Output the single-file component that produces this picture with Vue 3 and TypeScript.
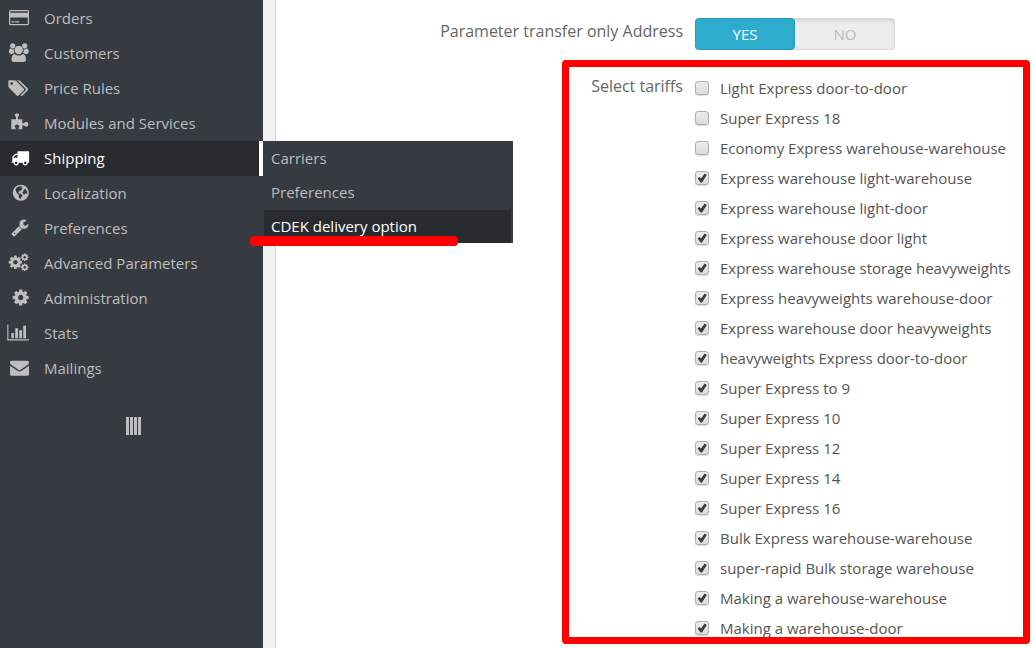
<script setup lang="ts">
import { ref } from 'vue'

interface Shape {
  d: string
  t?: string
}
interface MenuItem {
  label: string
  icon: Shape[]
  active?: boolean
}
interface Tariff {
  label: string
  checked: boolean
}

const cog =
  'M1152 896q0-106-75-181t-181-75-181 75-75 181 75 181 181 75 181-75 75-181zm512-109v222q0 12-8 23t-20 13l-185 28q-19 54-39 91 35 50 107 138 10 12 10 25t-9 23q-27 37-99 108t-94 71q-12 0-26-9l-138-108q-44 23-91 38-16 136-29 186-7 28-36 28h-222q-14 0-24.5-8.5t-11.5-21.5l-28-184q-49-16-90-37l-141 107q-10 9-25 9-14 0-25-11-126-114-165-168-7-10-7-23 0-12 8-23 15-21 51-66.5t54-70.5q-27-50-41-99l-183-27q-13-2-21-12.5t-8-23.5v-222q0-12 8-23t19-13l186-28q14-46 39-92-40-57-107-138-10-12-10-24 0-10 9-23 26-36 98.5-107.5t94.5-71.5q13 0 26 10l138 107q44-23 91-38 16-136 29-186 7-28 36-28h222q14 0 24.5 8.5t11.5 21.5l28 184q49 16 90 37l142-107q9-9 24-9 13 0 25 10 129 119 165 170 7 8 7 22 0 12-8 23-15 21-51 66.5t-54 70.5q26 50 41 98l183 28q13 2 21 12.5t8 23.5z'

const menu: MenuItem[] = [
  {
    label: 'Orders',
    icon: [
      {
        d: 'M2.5 2h17a1.5 1.5 0 0 1 1.5 1.5v12.3a1.5 1.5 0 0 1-1.5 1.5h-17a1.5 1.5 0 0 1-1.5-1.5V3.5A1.5 1.5 0 0 1 2.5 2zM2.2 3.2v1.6h17.6V3.2zM2.2 9.5v6.6h17.6V9.5zM3.5 13.2h2.8v1.4H3.5zM7.2 13.2h4v1.4h-4z',
      },
    ],
  },
  {
    label: 'Customers',
    icon: [
      { d: 'M4.7 0.2a2.7 2.7 0 1 0 .01 0zM16.7 0.2a2.7 2.7 0 1 0 .01 0zM10.7 2.8a4.2 4.2 0 1 0 .01 0z' },
      { d: 'M2.7 5.4q3 1.3 3.2 .8q-.5 2 .6 3.9q-1.3 0-2 .9H2.7Q1 10.6 1 9q0-3.4 1.7-3.6zM18.9 5.4q-3 1.3-3.3 .8q.5 2-.6 3.9q1.3 0 2 .9h1.9q1.8-.4 1.8-2q0-3.4-1.8-3.6z' },
      { d: 'M6.5 11q1.7 1.5 4.2 1.5t4.2-1.5q2.9.4 3.1 5.5q0 2.5-2.5 2.5H6q-2.5 0-2.5-2.5q.2-5.1 3-5.5z' },
    ],
  },
  {
    label: 'Price Rules',
    icon: [
      {
        d: 'M384 448q0-53-37.5-90.5t-90.5-37.5-90.5 37.5-37.5 90.5 37.5 90.5 90.5 37.5 90.5-37.5 37.5-90.5zm1067 576q0 53-37 90l-491 492q-39 37-91 37-53 0-90-37l-715-716q-38-37-64.5-101t-26.5-117v-416q0-52 38-90t90-38h416q53 0 117 26.5t102 64.5l715 714q37 39 37 91zm384 0q0 53-37 90l-491 492q-39 37-91 37-36 0-59-14t-53-45l470-470q37-37 37-90 0-52-37-91l-715-714q-38-38-102-64.5t-117-26.5h224q53 0 117 26.5t102 64.5l715 714q37 39 37 91z',
        t: 'translate(1 .8) scale(.0104)',
      },
    ],
  },
  {
    label: 'Modules and Services',
    icon: [
      {
        d: 'M3.3 6.2H8V4Q6.7 3.2 6.8 2Q7.2.3 9 .3T11.2 2Q11.3 3.2 10 4v2.2h4.3v4H16q1-1.4 2.3-1.4q2 .3 2.1 2.5q-.1 2.2-2.1 2.5q-1.3 0-2.3-1.4h-1.7v3.9H10.3v-1.2q1-.8.9-1.7Q10.9 11.7 9 11.6q-1.9.1-2.2 1.8q-.1.9.9 1.7v1.2H3.3z',
      },
    ],
  },
  {
    label: 'Shipping',
    active: true,
    icon: [
      {
        d: 'M640 1408q0-52-38-90t-90-38-90 38-38 90 38 90 90 38 90-38 38-90zm-384-512h384v-256h-158q-13 0-22 9l-195 195q-9 9-9 22v30zm1280 512q0-52-38-90t-90-38-90 38-38 90 38 90 90 38 90-38 38-90zm256-1088v1024q0 15-4 26.5t-13.5 18.5-16.5 11.5-23.5 6-22.5 2-25.5 0-22.5-.5q0 106-75 181t-181 75-181-75-75-181h-384q0 106-75 181t-181 75-181-75-75-181h-64q-3 0-22.5.5t-25.5 0-22.5-2-23.5-6-16.5-11.5-13.5-18.5-4-26.5q0-26 19-45t45-19v-320q0-8-.5-35t0-38 2.5-34.5 6.5-37 14-30.5 22.5-30l198-198q19-19 50.5-32t58.5-13h160v-192q0-26 19-45t45-19h1024q26 0 45 19t19 45z',
        t: 'translate(3 .6) scale(.0101)',
      },
    ],
  },
  {
    label: 'Localization',
    icon: [
      {
        d: 'M12.8 1.7a8 8 0 1 0 .01 0zM12 3.2l2.6.2-1.4 1.7 1.5.6-1.8 1.9-2 .8-.5 1.6 2.4.7 1.8 1.8-1.3 1.8-.7 2-1.7-1.9-.2-2.6-2.3-2.4-1-3.1 1.6-2.1zM17 5.6l2 2.6.4 2.5-2.2-.2-1.2 1.5-1.7-2.5 1.2-1.8z',
      },
    ],
  },
  {
    label: 'Preferences',
    icon: [
      {
        d: 'M448 1472q0-26-19-45t-45-19-45 19-19 45 19 45 45 19 45-19 19-45zm644-420l-682 682q-37 37-90 37-52 0-91-37l-106-108q-38-36-38-90 0-53 38-91l681-681q39 98 114.5 173.5t173.5 114.5zm634-435q0 39-23 106-47 134-164.5 217.5t-258.5 83.5q-185 0-316.5-131.5t-131.5-316.5 131.5-316.5 316.5-131.5q58 0 121.5 16.5t107.5 46.5q16 11 16 28t-16 28l-293 169v224l193 107q5-3 79-48.5t135.5-81 70.5-35.5q15 0 23.5 10t8.5 25z',
        t: 'translate(2.8 .2) scale(.0103)',
      },
    ],
  },
  {
    label: 'Advanced Parameters',
    icon: [
      { d: cog, t: 'translate(-.4 1.5) scale(.0087)' },
      { d: cog, t: 'translate(12.2 -.2) scale(.005)' },
      { d: cog, t: 'translate(12.2 9.8) scale(.005)' },
    ],
  },
  { label: 'Administration', icon: [{ d: cog, t: 'translate(3.4 .2) scale(.0104)' }] },
  {
    label: 'Stats',
    icon: [
      { d: 'M-.7 1.6H.4v14.6h20.4v1.2H-.7zM3.3 10h2.5v5.2H3.3zM7.2 5.3H10v9.9H7.2zM11.2 7.3H14v7.9h-2.8zM15.2 2.7H18v12.5h-2.8z' },
    ],
  },
  {
    label: 'Mailings',
    icon: [
      {
        d: 'M1792 710v794q0 66-47 113t-113 47h-1472q-66 0-113-47t-47-113v-794q44 49 101 87 362 246 497 345 57 42 92.5 65.5t94.5 48 110 24.5h2q51 0 110-24.5t94.5-48 92.5-65.5q170-123 498-345 57-39 100-87zm0-294q0 79-49 151t-122 123q-376 261-468 325-10 7-42.5 31t-54 38.5-52 32.5-57.5 27-50 9h-2q-23 0-50-9t-57.5-27-52-32.5-54-38.5-42.5-31q-91-64-262-182.5t-205-142.5q-62-42-117-115.5t-55-136.5q0-78 41.5-130t118.5-52h1472q65 0 112.5 47t47.5 113z',
        t: 'translate(2 0) scale(.0106)',
      },
    ],
  },
]

const submenu = ['Carriers', 'Preferences', 'CDEK delivery option']

const addressOnly = ref('yes')

const tariffs = ref<Tariff[]>([
  { label: 'Light Express door-to-door', checked: false },
  { label: 'Super Express 18', checked: false },
  { label: 'Economy Express warehouse-warehouse', checked: false },
  { label: 'Express warehouse light-warehouse', checked: true },
  { label: 'Express warehouse light-door', checked: true },
  { label: 'Express warehouse door light', checked: true },
  { label: 'Express warehouse storage heavyweights', checked: true },
  { label: 'Express heavyweights warehouse-door', checked: true },
  { label: 'Express warehouse door heavyweights', checked: true },
  { label: 'heavyweights Express door-to-door', checked: true },
  { label: 'Super Express to 9', checked: true },
  { label: 'Super Express 10', checked: true },
  { label: 'Super Express 12', checked: true },
  { label: 'Super Express 14', checked: true },
  { label: 'Super Express 16', checked: true },
  { label: 'Bulk Express warehouse-warehouse', checked: true },
  { label: 'super-rapid Bulk storage warehouse', checked: true },
  { label: 'Making a warehouse-warehouse', checked: true },
  { label: 'Making a warehouse-door', checked: true },
])
</script>

<template>
  <div class="page">
    <nav class="sidebar" aria-label="Main menu">
      <ul class="menu">
        <li v-for="item in menu" :key="item.label" class="menu-item" :class="{ active: item.active }">
          <a href="#" class="menu-link">
            <svg class="icon" viewBox="-1 0 23 21" aria-hidden="true">
              <path v-for="(s, i) in item.icon" :key="i" :d="s.d" :transform="s.t" fill-rule="evenodd" />
            </svg>
            <span>{{ item.label }}</span>
          </a>
          <ul v-if="item.active" class="submenu">
            <li v-for="(sub, i) in submenu" :key="sub">
              <a href="#" class="sub-link" :class="{ current: i === 2 }">{{ sub }}</a>
            </li>
            <li class="underline" aria-hidden="true"></li>
          </ul>
        </li>
      </ul>
      <button type="button" class="collapse" aria-label="Collapse menu">
        <svg viewBox="0 0 15 18" aria-hidden="true">
          <path d="M0 0h3v18H0zM4 0h3v18H4zM8 0h3v18H8zM12 0h3v18h-3z" />
        </svg>
      </button>
    </nav>

    <main class="content">
      <div class="row" role="radiogroup" aria-labelledby="address-label">
        <span id="address-label" class="row-label">Parameter transfer only Address</span>
        <div class="switch">
          <input id="address-yes" v-model="addressOnly" type="radio" name="address" value="yes" />
          <label for="address-yes">YES</label>
          <input id="address-no" v-model="addressOnly" type="radio" name="address" value="no" />
          <label for="address-no">NO</label>
        </div>
      </div>

      <div class="row tariffs" role="group" aria-labelledby="tariff-label">
        <span id="tariff-label" class="row-label">Select tariffs</span>
        <div class="tariff-list">
          <label v-for="tariff in tariffs" :key="tariff.label" class="tariff">
            <input v-model="tariff.checked" type="checkbox" />
            <span>{{ tariff.label }}</span>
          </label>
        </div>
        <div class="frame" aria-hidden="true"></div>
      </div>
    </main>
  </div>
</template>

<style>
body {
  margin: 0;
}
</style>

<style scoped>
.page {
  display: flex;
  min-height: 100vh;
  background: #eff1f2;
  font-family: 'Open Sans', 'Noto Sans', sans-serif;
  font-size: 15px;
  line-height: 20px;
  color: #555;
}

ul {
  list-style: none;
  margin: 0;
  padding: 0;
}

.sidebar {
  flex: 0 0 263px;
  box-sizing: border-box;
  padding-top: 1px;
  background: #363a41;
}

.menu-item {
  position: relative;
}

.menu-link {
  display: flex;
  align-items: flex-start;
  gap: 14px;
  padding: 7px 0 7px 7px;
  color: #bebebe;
  text-decoration: none;
}

.icon {
  flex: none;
  width: 23px;
  height: 21px;
  fill: currentColor;
}

.active > .menu-link {
  background: #282b30;
  border-right: 4px solid #fff;
  color: #fff;
}

.submenu {
  position: absolute;
  z-index: 2;
  top: 0;
  left: 100%;
  width: 250px;
  box-sizing: border-box;
  padding: 1px 2px 0 1px;
  background: #363a41;
}

.sub-link {
  display: block;
  padding: 6px 7px 8px;
  color: #bebebe;
  text-decoration: none;
}

.sub-link.current {
  padding-bottom: 7px;
  background: #282b30;
  color: #fff;
}

.underline {
  position: absolute;
  left: -13px;
  bottom: -3px;
  width: 208px;
  height: 10px;
  border-radius: 4px;
  background: #f00;
}

.collapse {
  display: block;
  margin: 31px auto 0;
  padding: 0 0 0 4px;
  border: 0;
  background: none;
  line-height: 0;
}

.collapse svg {
  width: 15px;
  height: 18px;
  fill: #bebebe;
}

.content {
  flex: 1;
  min-width: 0;
  box-sizing: border-box;
  margin-left: 12px;
  padding-top: 18px;
  border-left: 1px solid #d3d8db;
  background: #fff;
}

.row {
  display: grid;
  grid-template-columns: minmax(0, 407fr) minmax(0, 341fr);
  column-gap: 12px;
  align-items: start;
}

.row-label {
  padding-top: 3px;
  text-align: right;
  font-size: 16px;
  color: #666;
}

.switch {
  position: relative;
  display: flex;
  width: 200px;
  height: 32px;
  box-sizing: border-box;
  border-radius: 4px;
  background: #ededed;
  box-shadow: inset 0 0 0 1px #dcdcdc, inset 0 2px 5px #ccc;
}

.switch input {
  position: absolute;
  opacity: 0;
  margin: 0;
}

.switch label {
  flex: 1;
  box-sizing: border-box;
  border: 1px solid transparent;
  border-radius: 4px;
  line-height: 30px;
  text-align: center;
  color: #bbb;
}

.switch input:checked + label {
  border-color: #2799b8;
  background: #2eacce;
  color: #fff;
}

.tariffs {
  position: relative;
  margin-top: 23px;
}

.tariff {
  display: flex;
  align-items: center;
  gap: 11px;
  height: 30px;
  white-space: nowrap;
}

.tariff input {
  flex: none;
  appearance: none;
  width: 14px;
  height: 14px;
  box-sizing: border-box;
  margin: 0;
  border: 1px solid #adadad;
  border-radius: 3px;
  background: linear-gradient(#ececec, #dcdcdc);
  box-shadow: 0 1px 1px #ddd;
}

.tariff input:checked::before {
  content: '';
  display: block;
  width: 12px;
  height: 12px;
  background: #3c3c3c;
  clip-path: polygon(14% 54%, 28% 42%, 42% 54%, 72% 12%, 90% 24%, 50% 88%, 38% 88%);
}

.frame {
  position: absolute;
  top: -13px;
  right: 6px;
  bottom: -1px;
  left: 286px;
  border: 7px solid #f00;
  border-radius: 4px;
  pointer-events: none;
}
</style>
